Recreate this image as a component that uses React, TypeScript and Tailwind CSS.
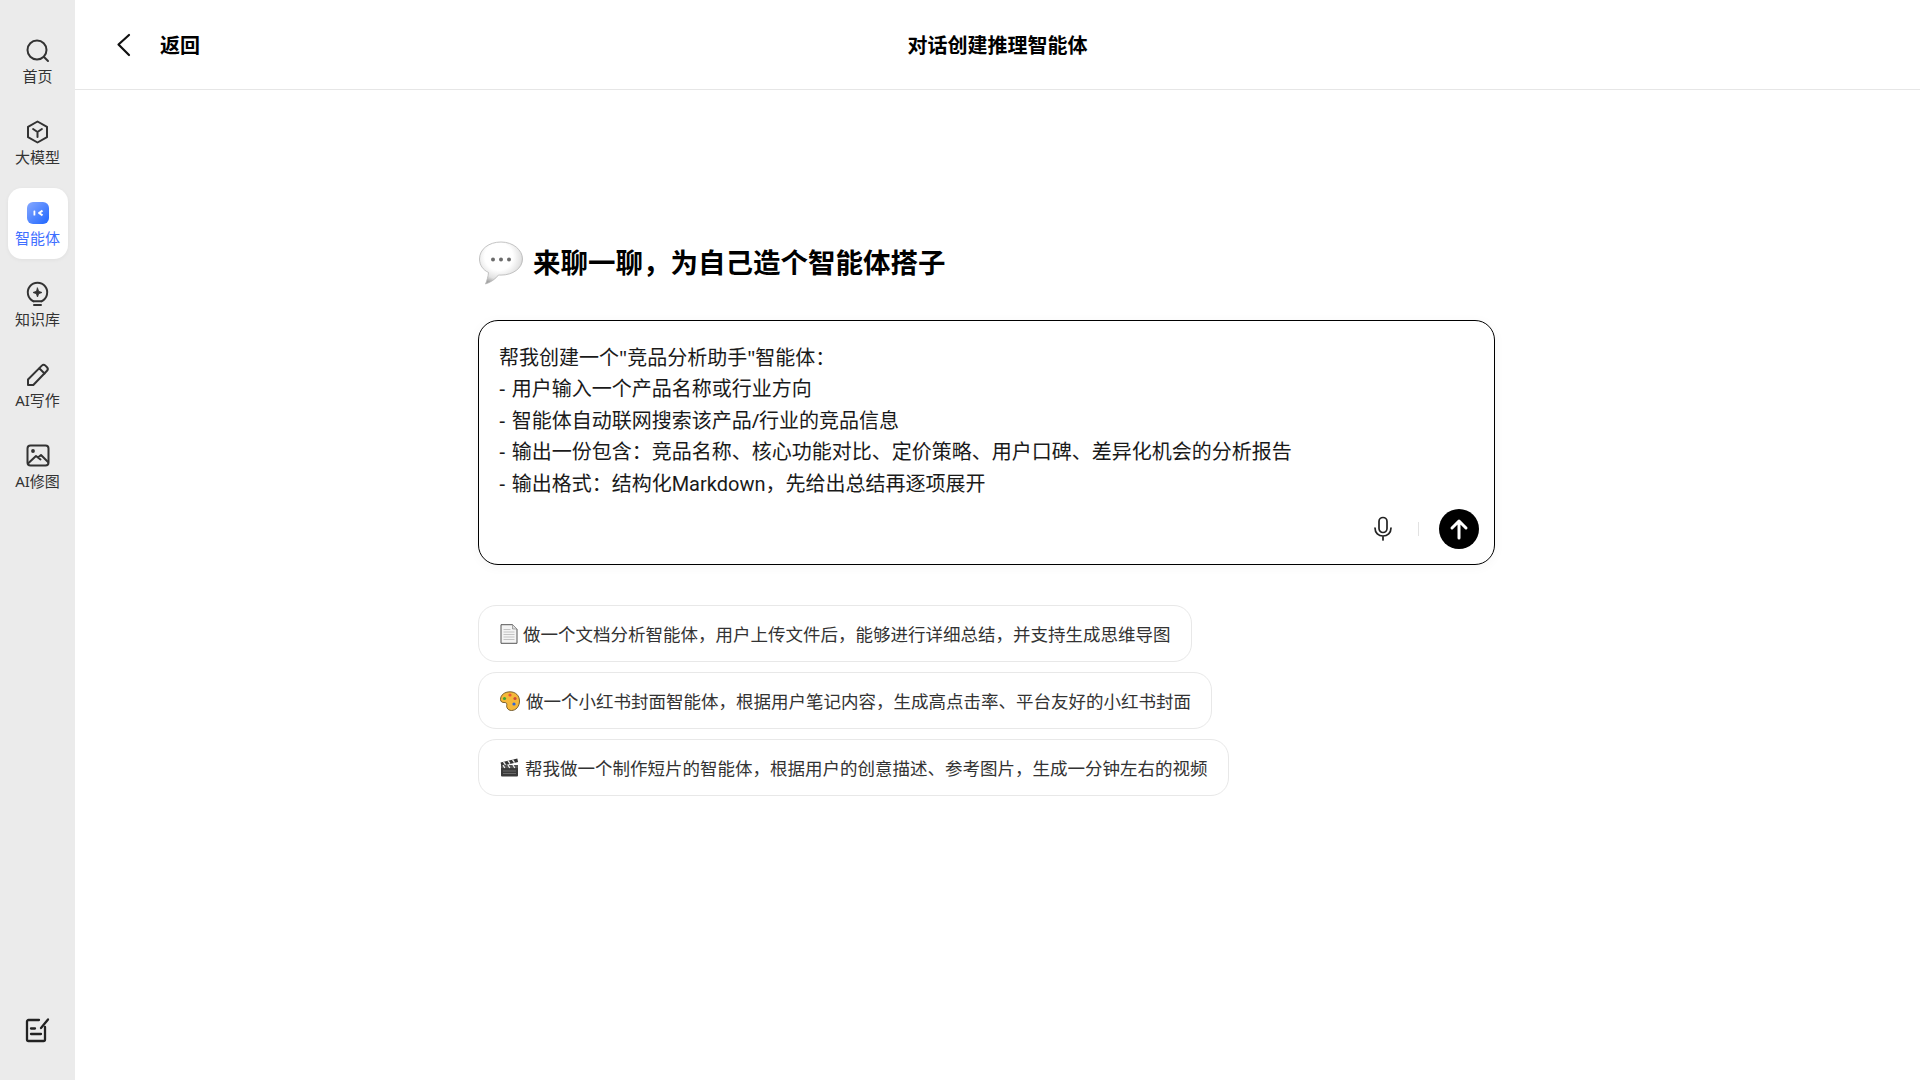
import React from "react";

const stroke = { fill: "none", stroke: "#333", strokeWidth: 2, strokeLinecap: "round" as const, strokeLinejoin: "round" as const };

const IconSearch = () => (
  <svg width="26" height="26" viewBox="0 0 26 26" {...stroke}>
    <circle cx="12" cy="12" r="9.5" />
    <path d="M19 19l4 4" />
  </svg>
);
const IconCube = () => (
  <svg width="26" height="26" viewBox="0 0 26 26" {...stroke}>
    <path d="M12.500 2.500l9.500 5.300v10.400l-9.500 5.300L3 18.200V7.800z" />
    <path d="M8.100 10l4.400 3 4.400-3M12.500 13v5" />
  </svg>
);
const IconAgent = () => (
  <svg width="22" height="22" viewBox="0 0 22 22">
    <defs>
      <linearGradient id="ag" x1="0" y1="0" x2="1" y2="1">
        <stop offset="0" stopColor="#86a8ff" />
        <stop offset="1" stopColor="#1f66ff" />
      </linearGradient>
    </defs>
    <rect width="22" height="22" rx="6" fill="url(#ag)" />
    <rect x="6.500" y="8.500" width="1.800" height="5" rx="0.600" fill="#fff" />
    <path d="M15.500 8.600L12 11l3.500 2.400" fill="none" stroke="#fff" strokeWidth="1.900" strokeLinejoin="round" />
  </svg>
);
const IconBulb = () => (
  <svg width="26" height="26" viewBox="0 0 26 26" {...stroke}>
    <path d="M8.500 20.300a9.700 9.700 0 1 1 8 0" />
    <path d="M8.500 20.300h8M9 24h7" />
    <path d="M12.500 7l1.200 3.300 3.300 1.200-3.300 1.200-1.200 3.300-1.200-3.300L8 11.500l3.300-1.200z" fill="#333" strokeWidth="0.800" />
  </svg>
);
const IconPen = () => (
  <svg width="26" height="26" viewBox="0 0 26 26" {...stroke}>
    <path d="M3 23v-5.500L16.800 3.600a2.600 2.600 0 0 1 3.600 0l1.600 1.600a2.600 2.600 0 0 1 0 3.600L8.300 23z" />
    <path d="M14.500 6.500l5 5" />
  </svg>
);
const IconImage = () => (
  <svg width="26" height="26" viewBox="0 0 26 26" {...stroke}>
    <rect x="2.500" y="2.500" width="21" height="20" rx="3" />
    <circle cx="8" cy="8" r="0.900" fill="#333" />
    <path d="M3 20.500l8-7.500 4.500 3.500M13 14.500l3-2.500 7 7" />
  </svg>
);
const IconNote = () => (
  <svg width="26" height="26" viewBox="0 0 26 26" fill="none" stroke="#222" strokeWidth="2.300" strokeLinecap="round" strokeLinejoin="round">
    <path d="M15 3H4.500a1.500 1.500 0 0 0-1.500 1.500v18A1.500 1.500 0 0 0 4.500 24h15a1.500 1.500 0 0 0 1.500-1.500V10" />
    <path d="M17 11l7-8.500" />
    <path d="M7 11.500h4M7 17h10" />
  </svg>
);

const Balloon = () => (
  <svg width="46" height="46" viewBox="0 0 46 46" className="translate-y-[1px]">
    <defs>
      <radialGradient id="bl" cx="0.45" cy="0.35" r="0.65">
        <stop offset="0.5" stopColor="#ffffff" />
        <stop offset="0.8" stopColor="#e2e2e2" />
        <stop offset="1" stopColor="#a0a0a0" />
      </radialGradient>
    </defs>
    <path d="M23 1C11 1 1.500 8 1.500 18c0 6 3.500 11 9 13.500-.3 4-1.500 8-3 11.500 5-1.500 10-5 13-9 1 .1 1.500.1 2.500.1 12 0 21.500-7 21.500-16.100S35 1 23 1z" fill="url(#bl)" stroke="#b5b5b5" strokeWidth="0.800" />
    <circle cx="15" cy="18.500" r="2" fill="#6b6b6b" />
    <circle cx="23" cy="18.500" r="2" fill="#6b6b6b" />
    <circle cx="31" cy="18.500" r="2" fill="#6b6b6b" />
  </svg>
);
const Doc = () => (
  <svg width="18" height="20" viewBox="0 0 18 20">
    <path d="M1 .7h11.500L17 5v14.300H1z" fill="#f4f4f4" stroke="#555" strokeWidth="1" />
    <path d="M12.500.7V5H17" fill="#ddd" stroke="#888" strokeWidth="0.700" />
    <path d="M3.500 5.500h7M3.500 8h11M3.500 10.500h11M3.500 13h11M3.500 15.500h11" stroke="#c4c4c4" strokeWidth="1" />
  </svg>
);
const Palette = () => (
  <svg width="20" height="20" viewBox="0 0 20 20">
    <path d="M10 .8C4.500.8.500 4 .500 8.500c0 2.500 2 3 3.500 3 1.500 0 2.800.3 2.800 1.700 0 1.500-.5 2.200.3 3.700.8 1.700 2.500 2.600 4.400 2.600 4.500 0 8-4 8-9.500S15.500.8 10 .8z" fill="#f5b83a" stroke="#5a4318" strokeWidth="0.800" />
    <circle cx="4.500" cy="7.500" r="1.600" fill="#3fa535" />
    <circle cx="10" cy="4" r="1.600" fill="#e8553a" />
    <circle cx="15" cy="7.500" r="1.600" fill="#d14a3a" />
    <circle cx="14" cy="13" r="1.600" fill="#2f66d8" />
  </svg>
);
const Clapper = () => (
  <svg width="19" height="19" viewBox="0 0 19 19">
    <rect x="1" y="7" width="17" height="11.500" rx="1" fill="#3a3a3a" />
    <path d="M1 7h17v3H1z" fill="#555" />
    <path d="M.6 4.500L17.300.5l.8 3.500L1.400 8z" fill="#333" />
    <path d="M3.500 3.800l2 3M8 2.700l2 3M12.500 1.600l2 3M3 7l1.800 3M8 7l1.800 3M13 7l1.800 3" stroke="#eee" strokeWidth="1.300" />
    <path d="M3 13h13M3 15.500h13" stroke="#777" strokeWidth="0.800" />
  </svg>
);

const navItems = [
  { label: "首页", icon: <IconSearch /> },
  { label: "大模型", icon: <IconCube /> },
  { label: "智能体", icon: <IconAgent />, active: true },
  { label: "知识库", icon: <IconBulb /> },
  { label: "AI写作", icon: <IconPen /> },
  { label: "AI修图", icon: <IconImage /> },
];

const chips = [
  { icon: <Doc />, gap: "gap-[5px]", text: "做一个文档分析智能体，用户上传文件后，能够进行详细总结，并支持生成思维导图" },
  { icon: <Palette />, gap: "gap-[6px]", text: "做一个小红书封面智能体，根据用户笔记内容，生成高点击率、平台友好的小红书封面" },
  { icon: <Clapper />, gap: "gap-[6px]", text: "帮我做一个制作短片的智能体，根据用户的创意描述、参考图片，生成一分钟左右的视频" },
];

export default function App() {
  return (
    <div className="flex h-screen w-full overflow-hidden bg-white font-['Noto_Sans','Noto_Sans_CJK_SC',sans-serif] text-black">
      <aside className="flex w-[75px] shrink-0 flex-col items-center bg-[#ebebeb] pt-[26px] pb-[37px]">
        <nav className="flex flex-col gap-[10.100px]">
          {navItems.map((item) => (
            <div
              key={item.label}
              className={`flex h-[71px] w-[60px] flex-col items-center rounded-[14px] pt-[12px] ${item.active ? "bg-white shadow-[0_1px_4px_rgba(0,0,0,0.05)]" : ""}`}
            >
              <div className="flex h-[26px] w-[26px] items-center justify-center">{item.icon}</div>
              <span className={`mt-[1px] whitespace-nowrap text-[15px] leading-[22px] ${item.active ? "text-[#3f6fff]" : "text-[#333]"}`}>
                {item.label}
              </span>
            </div>
          ))}
        </nav>
        <div className="mt-auto -translate-x-[1px]">
          <IconNote />
        </div>
      </aside>
      <main className="flex min-w-0 flex-1 flex-col">
        <header className="relative flex h-[90px] shrink-0 items-center border-b border-[#e6e6e6] pl-[38px]">
          <svg width="24" height="24" viewBox="0 0 24 24" fill="none" stroke="#111" strokeWidth="2.200" strokeLinecap="round" strokeLinejoin="round" className="mr-[23px]">
            <path d="M16 2L5.500 11.500 16 22" />
          </svg>
          <span className="translate-y-[1px] text-[20px] font-semibold">返回</span>
          <span className="absolute left-0 right-0 translate-y-[1px] text-center text-[20px] font-semibold">对话创建推理智能体</span>
        </header>
        <div className="mx-auto w-[1039px] pt-[148px]">
          <div className="flex h-[50px] w-[1017px] items-center gap-[9px]">
            <Balloon />
            <h1 className="text-[27.500px] font-bold leading-[40px]">来聊一聊，为自己造个智能体搭子</h1>
          </div>
          <div className="mt-[32px] flex h-[245px] w-[1017px] flex-col rounded-[20px] border border-black bg-white pb-[15px] pl-[20px] pr-[15px] pt-[20.700px] shadow-[0_2px_12px_rgba(0,0,0,0.04)]">
            <div className="whitespace-pre-line text-[20px] leading-[31.500px] text-[#1a1a1a] [word-spacing:1px]">
              {`帮我创建一个"竞品分析助手"智能体：
- 用户输入一个产品名称或行业方向
- 智能体自动联网搜索该产品/行业的竞品信息
- 输出一份包含：竞品名称、核心功能对比、定价策略、用户口碑、差异化机会的分析报告
- 输出格式：结构化`}
              <span className="font-['Roboto','Noto_Sans_CJK_SC',sans-serif]">Markdown</span>
              {`，先给出总结再逐项展开`}
            </div>
            <div className="mt-auto flex items-center justify-end">
              <svg width="22" height="26" viewBox="0 0 22 26" fill="none" stroke="#222" strokeWidth="1.700" strokeLinecap="round">
                <rect x="7" y="1.500" width="8" height="15" rx="4" />
                <path d="M3 12c0 5 3.500 8 8 8s8-3 8-8M11 20v4" />
              </svg>
              <div className="ml-[24px] mr-[20px] h-[14px] w-px bg-[#e2e2e2]" />
              <button className="flex h-[40px] w-[40px] items-center justify-center rounded-full bg-black">
                <svg width="22" height="22" viewBox="0 0 22 22" fill="none" stroke="#fff" strokeWidth="3" strokeLinecap="round" strokeLinejoin="round">
                  <path d="M11 20V3M4 10l7-7 7 7" />
                </svg>
              </button>
            </div>
          </div>
          <div className="mt-[40px] flex flex-col items-start gap-[10px]">
            {chips.map((c) => (
              <div key={c.text} className={`flex h-[57px] items-center rounded-[18px] border border-[#e8e8e8] bg-white pl-[21px] pr-[20px] text-[17.500px] text-[#333] ${c.gap}`}>
                {c.icon}
                <span className="translate-y-[1px] whitespace-nowrap">{c.text}</span>
              </div>
            ))}
          </div>
        </div>
      </main>
    </div>
  );
}
